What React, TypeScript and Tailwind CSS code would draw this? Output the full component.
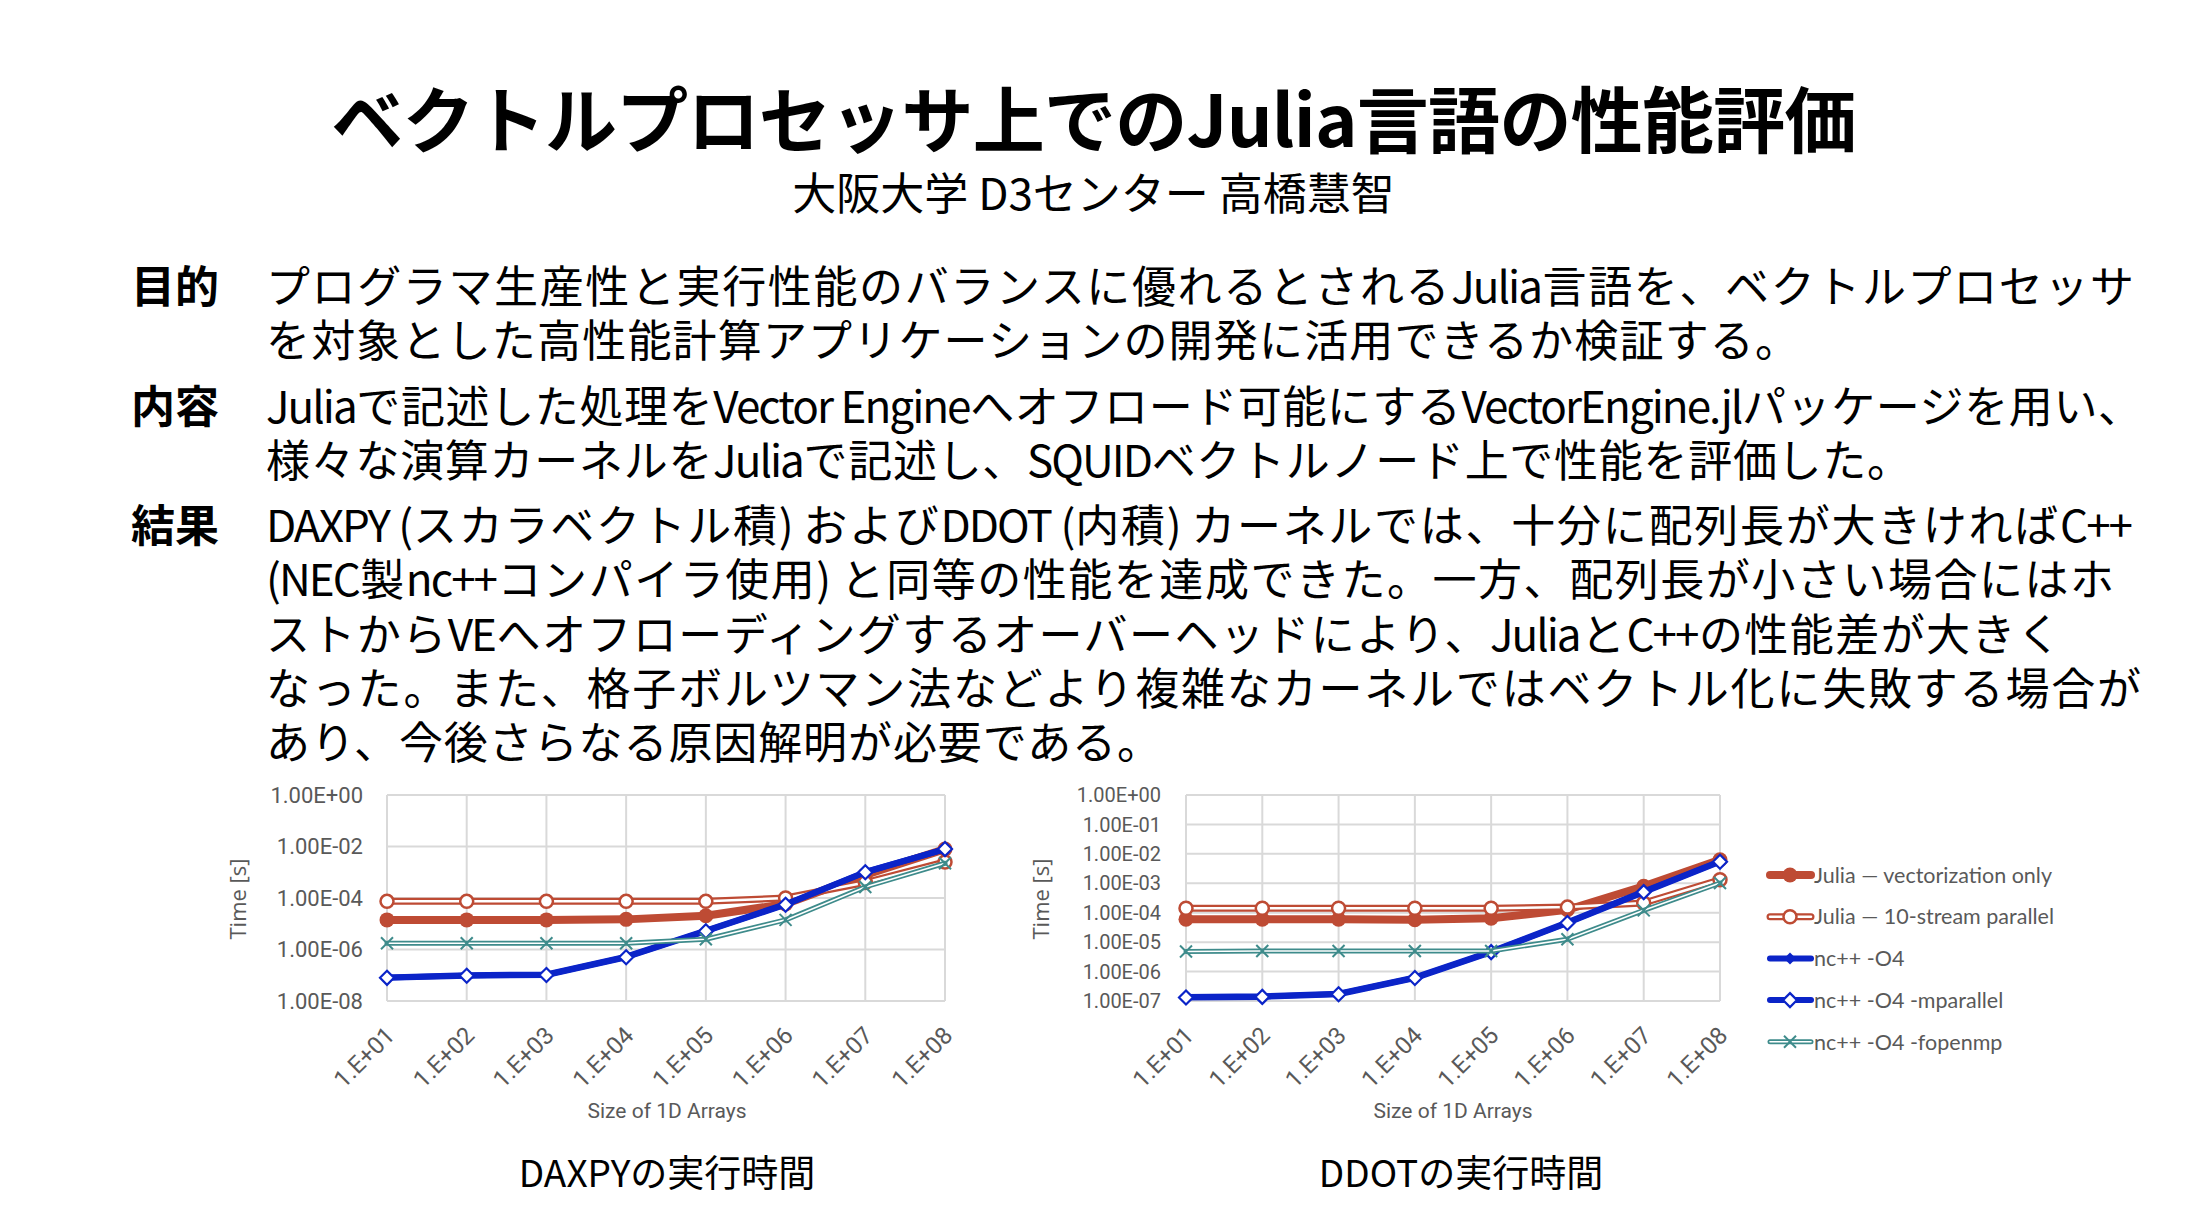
// ベクトルプロセッサ上でのJulia言語の性能評価 — ポスター1枚 (本文 + 2つの実行時間グラフ)

const RED = '#BE4B34';
const BLUE = '#0B24C8';
const TEAL = '#3E8B8B';
const GRID = '#D9D9D9';
const AXIS = '#595959';

type Kind = 'vec' | 'par' | 'o4' | 'mpar' | 'omp';
type Series = { kind: Kind; vals: number[] };

type ChartProps = {
  width: number;
  x0: number;
  x1: number;
  maxExp: number;
  minExp: number;
  ticks: { exp: number; label: string }[];
  labelRight: number;
  labelSize: number;
  timeX: number;
  sizeX: number;
  series: Series[];
  legend?: boolean;
};

const Y0 = 16;
const Y1 = 222;
const XLABELS = ['1.E+01', '1.E+02', '1.E+03', '1.E+04', '1.E+05', '1.E+06', '1.E+07', '1.E+08'];

const LEGEND: { kind: Kind; label: string }[] = [
  { kind: 'vec', label: 'Julia — vectorization only' },
  { kind: 'par', label: 'Julia — 10-stream parallel' },
  { kind: 'o4', label: 'nc++ -O4' },
  { kind: 'mpar', label: 'nc++ -O4 -mparallel' },
  { kind: 'omp', label: 'nc++ -O4 -fopenmp' },
];

function diamond(x: number, y: number, s: number) {
  return `M${x} ${y - s}L${x + s} ${y}L${x} ${y + s}L${x - s} ${y}Z`;
}

function Marker({ kind, x, y }: { kind: Kind; x: number; y: number }) {
  if (kind === 'vec') return <circle cx={x} cy={y} r={7.5} fill={RED} />;
  if (kind === 'par') return <circle cx={x} cy={y} r={6.5} fill="#fff" stroke={RED} strokeWidth={2.5} />;
  if (kind === 'o4') return <path d={diamond(x, y, 6)} fill={BLUE} />;
  if (kind === 'mpar') return <path d={diamond(x, y, 7)} fill="#fff" stroke={BLUE} strokeWidth={2.2} />;
  return (
    <g stroke={TEAL} strokeWidth={2}>
      <line x1={x - 6} y1={y - 6} x2={x + 6} y2={y + 6} />
      <line x1={x - 6} y1={y + 6} x2={x + 6} y2={y - 6} />
    </g>
  );
}

function Stroke({ kind, pts }: { kind: Kind; pts: string }) {
  const base = { points: pts, fill: 'none', strokeLinejoin: 'round' as const, strokeLinecap: 'round' as const };
  if (kind === 'vec') return <polyline {...base} stroke={RED} strokeWidth={8} />;
  if (kind === 'par')
    return (
      <>
        <polyline {...base} stroke={RED} strokeWidth={7} />
        <polyline {...base} stroke="#fff" strokeWidth={2.5} />
      </>
    );
  if (kind === 'o4' || kind === 'mpar') return <polyline {...base} stroke={BLUE} strokeWidth={6} />;
  return (
    <>
      <polyline {...base} stroke={TEAL} strokeWidth={5} />
      <polyline {...base} stroke="#fff" strokeWidth={1.6} />
    </>
  );
}

function TimeChart(p: ChartProps) {
  const step = (p.x1 - p.x0) / 7;
  const xs = XLABELS.map((_, i) => p.x0 + step * i);
  const yOf = (e: number) => Y0 + ((p.maxExp - e) / (p.maxExp - p.minExp)) * (Y1 - Y0);

  return (
    <svg width={p.width} height={350} className="block shrink-0" style={{ fontFamily: 'Roboto, sans-serif' }}>
      {p.ticks.map((t) => (
        <line key={t.label} x1={p.x0} x2={p.x1} y1={yOf(t.exp)} y2={yOf(t.exp)} stroke={GRID} strokeWidth={2} />
      ))}
      {xs.map((x) => (
        <line key={x} x1={x} x2={x} y1={Y0} y2={Y1} stroke={GRID} strokeWidth={2} />
      ))}
      {p.ticks.map((t) => (
        <text key={t.label} x={p.labelRight} y={yOf(t.exp)} dy="0.36em" textAnchor="end" fontSize={p.labelSize} fill={AXIS}>
          {t.label}
        </text>
      ))}
      <text
        transform={`translate(${p.timeX} 120) rotate(-90)`}
        textAnchor="middle"
        dy="0.36em"
        fontSize={22}
        fill={AXIS}
        style={{ fontFamily: '"Open Sans", sans-serif' }}
      >
        Time [s]
      </text>
      {xs.map((x, i) => (
        <text key={i} transform={`translate(${x + 9} 258) rotate(-45)`} textAnchor="end" fontSize={24} fill={AXIS}>
          {XLABELS[i]}
        </text>
      ))}
      <text x={p.sizeX} y={331} dy="0.36em" textAnchor="middle" fontSize={21} fill={AXIS}>
        Size of 1D Arrays
      </text>

      {p.series.map((s) => (
        <g key={s.kind}>
          <Stroke kind={s.kind} pts={s.vals.map((v, i) => `${xs[i]},${yOf(v)}`).join(' ')} />
          {s.vals.map((v, i) => (
            <Marker key={i} kind={s.kind} x={xs[i]} y={yOf(v)} />
          ))}
        </g>
      ))}

      {p.legend &&
        LEGEND.map((l, i) => {
          const y = 96 + i * 41.7;
          return (
            <g key={l.kind}>
              <Stroke kind={l.kind} pts={`750,${y} 791,${y}`} />
              <Marker kind={l.kind} x={770} y={y} />
              <text x={794} y={y} dy="0.36em" fontSize={21.5} fill={AXIS} style={{ fontFamily: 'Lato, sans-serif' }}>
                {l.label}
              </text>
            </g>
          );
        })}
    </svg>
  );
}

const DAXPY: Series[] = [
  { kind: 'vec', vals: [-4.85, -4.85, -4.85, -4.83, -4.69, -4.23, -3.1, -2.1] },
  { kind: 'par', vals: [-4.13, -4.13, -4.13, -4.13, -4.13, -4.0, -3.4, -2.6] },
  { kind: 'o4', vals: [-7.09, -7.0, -6.97, -6.28, -5.27, -4.24, -2.99, -2.1] },
  { kind: 'mpar', vals: [-7.1, -7.02, -6.99, -6.3, -5.29, -4.26, -3.0, -2.1] },
  { kind: 'omp', vals: [-5.76, -5.76, -5.76, -5.76, -5.6, -4.85, -3.57, -2.65] },
];

const DDOT: Series[] = [
  { kind: 'vec', vals: [-4.22, -4.22, -4.22, -4.24, -4.19, -3.9, -3.1, -2.2] },
  { kind: 'par', vals: [-3.85, -3.85, -3.85, -3.85, -3.85, -3.81, -3.67, -2.88] },
  { kind: 'o4', vals: [-6.86, -6.84, -6.75, -6.2, -5.32, -4.33, -3.28, -2.25] },
  { kind: 'mpar', vals: [-6.88, -6.86, -6.77, -6.22, -5.34, -4.35, -3.3, -2.27] },
  { kind: 'omp', vals: [-5.32, -5.3, -5.3, -5.3, -5.3, -4.9, -3.92, -2.99] },
];

// 英数字の塊だけ少し詰める (元スライドの Calibri 相当の幅に寄せる)
function Mixed({ text }: { text: string }) {
  const parts = text.split(/([A-Za-z0-9.+()]+(?: [A-Za-z0-9.+()]+)*)/);
  return (
    <>
      {parts.map((t, i) =>
        i % 2 === 1 ? (
          <span key={i} className="tracking-[-0.045em]">
            {t}
          </span>
        ) : (
          t
        ),
      )}
    </>
  );
}

type Line = { text: string; w: number };

const SECTIONS: { label: string; lines: Line[] }[] = [
  {
    label: '目的',
    lines: [
      { text: 'プログラマ生産性と実行性能のバランスに優れるとされるJulia言語を、ベクトルプロセッサ', w: 1868 },
      { text: 'を対象とした高性能計算アプリケーションの開発に活用できるか検証する。', w: 1533 },
    ],
  },
  {
    label: '内容',
    lines: [
      { text: 'Juliaで記述した処理をVector Engineへオフロード可能にするVectorEngine.jlパッケージを用い、', w: 1876 },
      { text: '様々な演算カーネルをJuliaで記述し、SQUIDベクトルノード上で性能を評価した。', w: 1645 },
    ],
  },
  {
    label: '結果',
    lines: [
      { text: 'DAXPY (スカラベクトル積) およびDDOT (内積) カーネルでは、十分に配列長が大きければC++', w: 1865 },
      { text: '(NEC製nc++コンパイラ使用) と同等の性能を達成できた。一方、配列長が小さい場合にはホ', w: 1848 },
      { text: 'ストからVEへオフローディングするオーバーヘッドにより、JuliaとC++の性能差が大きく', w: 1795 },
      { text: 'なった。また、格子ボルツマン法などより複雑なカーネルではベクトル化に失敗する場合が', w: 1875 },
      { text: 'あり、今後さらなる原因解明が必要である。', w: 895 },
    ],
  },
];

export default function App() {
  return (
    <div
      className="w-[2187px] h-[1230px] bg-white text-black overflow-hidden"
      style={{ fontFamily: '"Noto Sans CJK JP", sans-serif' }}
    >
      <header className="pt-[73px] text-center">
        <h1 className="text-[72px] leading-[86px] font-bold tracking-[-0.01em]">ベクトルプロセッサ上でのJulia言語の性能評価</h1>
        <p className="mt-[6px] text-[44px] leading-[52px]">大阪大学 D3センター 高橋慧智</p>
      </header>

      <main className="mt-[40px] flex flex-col gap-[11px]">
        {SECTIONS.map((s) => (
          <section key={s.label} className="flex">
            <div className="w-[266px] shrink-0 pl-[131px] text-[44px] leading-[54.3px] font-bold">{s.label}</div>
            <div className="flex flex-col">
              {s.lines.map((l, i) => (
                <div
                  key={i}
                  style={{ width: l.w }}
                  className="text-[44px] leading-[54.3px] whitespace-nowrap text-justify [text-align-last:justify] [text-justify:inter-character]"
                >
                  <Mixed text={l.text} />
                </div>
              ))}
            </div>
          </section>
        ))}
      </main>

      <div className="mt-[11px] flex pl-[220px] gap-[40px]">
        <TimeChart
          width={760}
          x0={167}
          x1={725}
          maxExp={0}
          minExp={-8}
          ticks={[
            { exp: 0, label: '1.00E+00' },
            { exp: -2, label: '1.00E-02' },
            { exp: -4, label: '1.00E-04' },
            { exp: -6, label: '1.00E-06' },
            { exp: -8, label: '1.00E-08' },
          ]}
          labelRight={143}
          labelSize={22}
          timeX={18}
          sizeX={447}
          series={DAXPY}
        />
        <TimeChart
          width={1120}
          x0={166}
          x1={700}
          maxExp={0}
          minExp={-7}
          ticks={[0, -1, -2, -3, -4, -5, -6, -7].map((e) => ({
            exp: e,
            label: e === 0 ? '1.00E+00' : `1.00E-0${-e}`,
          }))}
          labelRight={141}
          labelSize={20}
          timeX={21}
          sizeX={433}
          series={DDOT}
          legend
        />
      </div>

      <div className="mt-[20px] flex text-[37px] leading-[44px]">
        <div className="ml-[512px] w-[310px] text-center">DAXPYの実行時間</div>
        <div className="ml-[484px] w-[310px] text-center">DDOTの実行時間</div>
      </div>
    </div>
  );
}
